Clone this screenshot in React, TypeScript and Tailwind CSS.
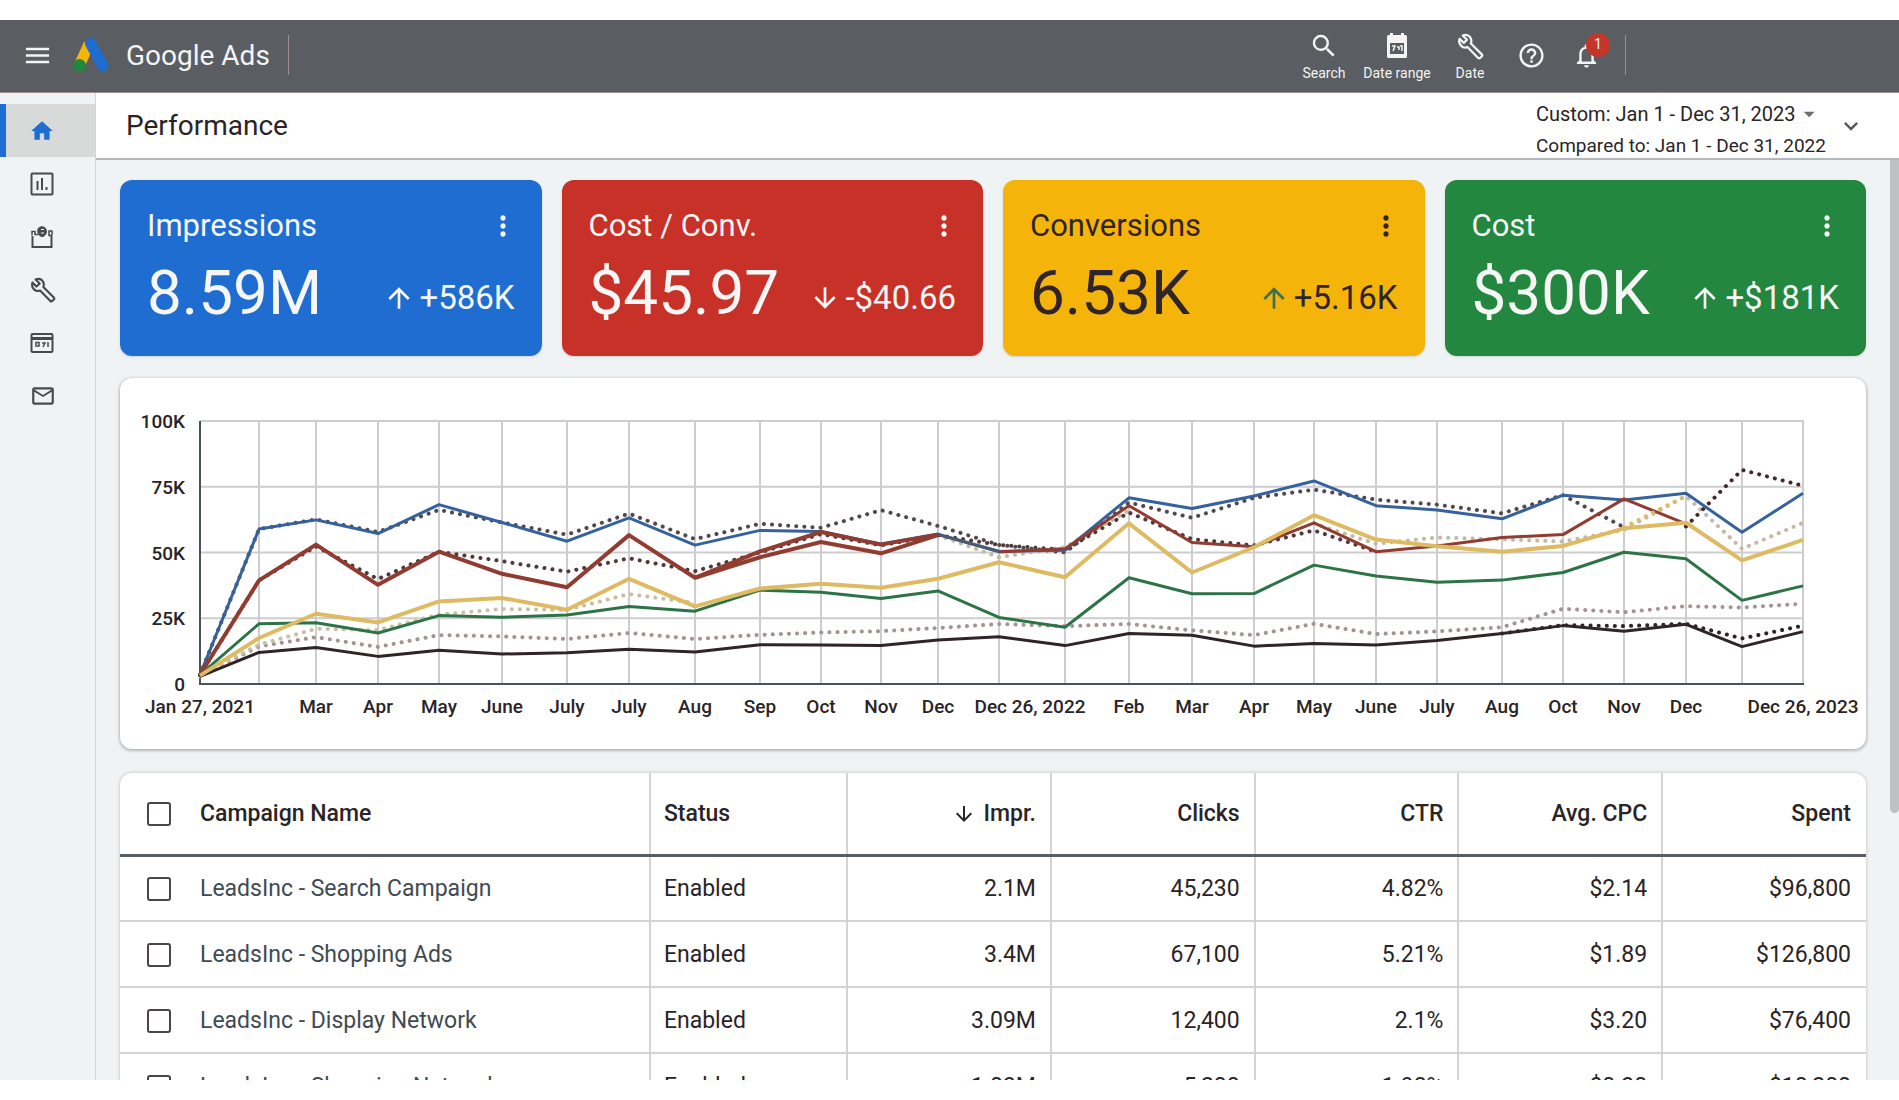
import React from "react";
import {
  MdMenu,
  MdHome,
  MdSearch,
  MdOutlineMailOutline,
  MdHelpOutline,
  MdNotificationsNone,
  MdMoreVert,
  MdArrowUpward,
  MdArrowDownward,
  MdArrowDropDown,
  MdKeyboardArrowDown,
} from "react-icons/md";

function AdsLogo() {
  return (
    <svg width="38" height="36" viewBox="0 0 38 36" aria-hidden="true">
      <path d="M17 7 L7 29" stroke="#f4b40a" strokeWidth="11" />
      <path d="M18.500 6.500 L31 29" stroke="#1f6dd0" strokeWidth="11" strokeLinecap="round" />
      <circle cx="7.500" cy="28.500" r="6.500" fill="#23873f" />
    </svg>
  );
}

function WrenchIcon({ size = 26, weight = 2 }: { size?: number; weight?: number }) {
  return (
    <svg width={size} height={size} viewBox="0 0 24 24" fill="none" stroke="currentColor" strokeWidth={weight} strokeLinejoin="round" aria-hidden="true">
      <path d="M2.300 5.200 L6 8.800 L8.900 6 L5.200 2.300 C8 1 11 2 12.200 4.600 C13 6.300 12.900 7.800 12.300 9.300 L22 19 C22.600 19.600 22.600 20.200 22 20.800 L20.500 22.200 C20 22.700 19.400 22.700 18.800 22.200 L9.300 12.500 C7.500 13.200 5.500 13 3.900 11.600 C2 9.900 1.500 7.500 2.300 5.200 Z" />
    </svg>
  );
}

function ReportsIcon() {
  return (
    <svg width="24" height="24" viewBox="0 0 24 24" fill="none" stroke="currentColor" strokeWidth="2" aria-hidden="true">
      <rect x="1.500" y="1.500" width="21" height="21" rx="1" />
      <path d="M7.500 9v9M12 6v12M16.500 15v3" />
    </svg>
  );
}

function BriefcaseIcon() {
  return (
    <svg width="24" height="24" viewBox="0 0 24 24" fill="none" stroke="currentColor" strokeWidth="2" aria-hidden="true">
      <path d="M2.500 11V22h19V11" />
      <path d="M2 10.500V6.500h3v3h3M22 10.500V6h-3v4.500h3" strokeWidth="1.500" />
      <path d="M8 4C9 1 15.500 1 16 4.500C17.500 8 15 11.500 12 11.500C9 11.500 7 7.500 8 4Z" fill="currentColor" strokeWidth="1" />
      <path d="M11 4.500h3M11 8h3" stroke="#f1f3f4" strokeWidth="1" />
    </svg>
  );
}

function BillingIcon() {
  return (
    <svg width="24" height="24" viewBox="0 0 24 24" fill="none" stroke="currentColor" strokeWidth="2" aria-hidden="true">
      <rect x="1.500" y="3" width="21" height="18" rx="1" />
      <path d="M2 7.500h20" strokeWidth="3" />
      <path d="M6 11.500v3.500h3v-3.500zM12 12h3l-2 4M18 11v5" strokeWidth="1.500" />
    </svg>
  );
}

function CalendarIcon() {
  return (
    <svg width="22" height="26" viewBox="0 0 22 26" aria-hidden="true">
      <path d="M4 0h3v2h8V0h3v2h1.500A1.500 1.500 0 0 1 21 3.500v20a1.500 1.500 0 0 1-1.500 1.500h-17A1.500 1.500 0 0 1 1 23.500v-20A1.500 1.500 0 0 1 2.500 2H4z" fill="currentColor" />
      <path d="M4 10h14v11H4z" fill="#5a5d61" />
      <path d="M6 13h3l-2 5M11 14h2v3M14 13h2v5" stroke="currentColor" strokeWidth="1.500" fill="none" />
    </svg>
  );
}

const navItems = [
  { label: "Home", icon: <MdHome className="size-[26px]" />, active: true },
  { label: "Reports", icon: <ReportsIcon />, active: false },
  { label: "Campaigns", icon: <BriefcaseIcon />, active: false },
  { label: "Tools", icon: <WrenchIcon size={26} />, active: false },
  { label: "Billing", icon: <BillingIcon />, active: false },
  { label: "Messages", icon: <MdOutlineMailOutline className="size-[26px]" />, active: false },
];

function Header() {
  return (
    <header className="flex h-[73px] shrink-0 items-center border-b border-[#a08f8b] bg-[#5a5d61] pb-[2px] text-[#f4f4f4]">
      <button type="button" aria-label="Menu" className="ml-[22px]">
        <MdMenu className="size-[31px]" />
      </button>
      <div className="ml-[19px] flex items-center">
        <AdsLogo />
        <span className="ml-4 pt-[2px] text-[28px] leading-9">Google Ads</span>
      </div>
      <div className="ml-[18px] h-10 w-px bg-[#a08f8b]" />
      <div className="ml-auto flex items-center">
        <button type="button" className="flex w-[70px] flex-col items-center pt-1">
          <MdSearch className="size-[30px]" />
          <span className="mt-[2px] text-[14px] leading-5">Search</span>
        </button>
        <button type="button" className="flex w-[76px] flex-col items-center pt-1">
          <span className="flex h-[30px] items-center"><CalendarIcon /></span>
          <span className="mt-[2px] text-[14px] leading-5">Date range</span>
        </button>
        <button type="button" className="flex w-[70px] flex-col items-center pt-1">
          <span className="flex h-[30px] items-center"><WrenchIcon size={27} /></span>
          <span className="mt-[2px] text-[14px] leading-5">Date</span>
        </button>
        <button type="button" aria-label="Help" className="ml-3">
          <MdHelpOutline className="size-[29px]" />
        </button>
        <button type="button" aria-label="Notifications, 1 new" className="relative ml-[26px]">
          <MdNotificationsNone className="size-[29px]" />
          <span className="absolute -top-2 left-[14px] flex size-6 items-center justify-center rounded-full bg-[#c5362a] text-[14px]">1</span>
        </button>
        <div className="mr-[273px] ml-6 h-10 w-px bg-[#a08f8b]" />
      </div>
    </header>
  );
}

function Sidebar() {
  return (
    <nav className="w-24 shrink-0 border-r border-[#d2d4d5] bg-[#f0f3f3] pt-[11px] text-[#474a4e]">
      {navItems.map((item) => (
        <a
          key={item.label}
          href="#"
          aria-label={item.label}
          className={
            item.active
              ? "flex h-[53px] items-center border-l-6 border-[#1f6dd0] bg-[#d8d9d9] pl-[23px] text-[#1f6dd0]"
              : "flex h-[53px] items-center pl-[30px]"
          }
        >
          {item.icon}
        </a>
      ))}
    </nav>
  );
}

function TitleBar() {
  return (
    <div className="flex h-[67px] shrink-0 items-center border-b-2 border-[#b4b7ba] bg-white pl-[30px] text-[#2a2426]">
      <h1 className="text-[28px] leading-9">Performance</h1>
      <div className="ml-auto w-[286px] pt-2 leading-8">
        <div className="flex items-center text-[20px] leading-8 whitespace-nowrap">
          Custom: Jan 1 - Dec 31, 2023
          <MdArrowDropDown className="size-8 text-[#6b6e72]" />
        </div>
        <div className="text-[19px] leading-8 whitespace-nowrap">Compared to: Jan 1 - Dec 31, 2022</div>
      </div>
      <button type="button" aria-label="Expand" className="mr-[34px] ml-[15px] text-[#55585c]">
        <MdKeyboardArrowDown className="size-7" />
      </button>
    </div>
  );
}

const metrics = [
  { label: "Impressions", value: "8.59M", delta: "+586K", up: true, style: "bg-[#1f6dd0] text-[#f6f6f6]", arrow: "" },
  { label: "Cost / Conv.", value: "$45.97", delta: "-$40.66", up: false, style: "bg-[#c83127] text-[#f6f6f6]", arrow: "" },
  { label: "Conversions", value: "6.53K", delta: "+5.16K", up: true, style: "bg-[#f4b40a] text-[#2f2427]", arrow: "text-[#3b7050]" },
  { label: "Cost", value: "$300K", delta: "+$181K", up: true, style: "bg-[#23873f] text-[#f6f6f6]", arrow: "" },
];

function MetricCard({ metric }: { metric: (typeof metrics)[number] }) {
  return (
    <section className={`h-44 rounded-xl pr-[27px] pl-[27px] pt-7 shadow-sm ${metric.style}`}>
      <div className="flex items-center justify-between">
        <h2 className="text-[31px] leading-9">{metric.label}</h2>
        <button type="button" aria-label={`${metric.label} options`} className="-mr-1">
          <MdMoreVert className="size-8" />
        </button>
      </div>
      <div className="flex items-baseline justify-between">
        <span className="text-[62px] leading-[98px]">{metric.value}</span>
        <span className="flex items-center text-[33px] leading-10">
          <MdArrowUpward className={metric.up ? `mr-1 size-8 ${metric.arrow}` : "hidden"} />
          <MdArrowDownward className={metric.up ? "hidden" : "mr-1 size-8"} />
          {metric.delta}
        </span>
      </div>
    </section>
  );
}

const gridX = [80, 139, 196, 258, 319, 382, 447, 509, 575, 640, 701, 761, 818, 879, 945, 1009, 1072, 1134, 1194, 1256, 1317, 1382, 1443, 1504, 1566, 1622, 1683];

const axisLabels: [number, string][] = [
  [80, "Jan 27, 2021"], [196, "Mar"], [258, "Apr"], [319, "May"], [382, "June"], [447, "July"], [509, "July"],
  [575, "Aug"], [640, "Sep"], [701, "Oct"], [761, "Nov"], [818, "Dec"], [910, "Dec 26, 2022"], [1009, "Feb"],
  [1072, "Mar"], [1134, "Apr"], [1194, "May"], [1256, "June"], [1317, "July"], [1382, "Aug"], [1443, "Oct"],
  [1504, "Nov"], [1566, "Dec"], [1683, "Dec 26, 2023"],
];

type Series = { color: string; width: number; dotted?: boolean; start?: number; values: number[] };

const series: Series[] = [
  { color: "#a39391", width: 4, dotted: true, values: [3, 14.3, 17.8, 14.1, 18.6, 18.1, 17.1, 19.4, 17.1, 18.7, 19.6, 20.1, 21.3, 22.8, 22, 22.8, 20.4, 18.6, 22.9, 19, 20, 21.6, 28.6, 27.3, 29.6, 29.1, 30.5] },
  { color: "#c9bea4", width: 4, dotted: true, values: [3, 15, 21, 20.5, 26.4, 28.5, 28.2, 34.2, 30.8] },
  { color: "#c4b9a4", width: 4, dotted: true, start: 12, values: [56.6, 48.2, 52, 66] },
  { color: "#c4b9a4", width: 4, dotted: true, start: 18, values: [61, 53.3, 55.7, 55, 54.2, 58.6, 71.5, 51.4, 61.3] },
  { color: "#51494c", width: 4, dotted: true, values: [3.5, 58.9, 62.6, 57.8, 66.2, 61.4, 56.8, 64.8, 55.1, 60.9, 59.4, 66.1, 60.1, 52.9, 50, 69, 63.2, 70.8, 73.9, 70.1, 68.2, 64.9, 71.8, 59.6] },
  { color: "#51393a", width: 4, dotted: true, values: [3.5, 39.4, 52.3, 39.9, 50.3, 46.7, 42.7, 47.8, 42.9, 50, 57, 52.7, 56.6, 52.9, 51, 65.2, 55.1, 52.7, 58.4, 50.3] },
  { color: "#45282b", width: 4, dotted: true, start: 24, values: [59.9, 81.4, 75.4] },
  { color: "#2f2427", width: 4, dotted: true, start: 21, values: [19.2, 22.4, 22, 22.9, 17.3, 22.2] },
  { color: "#2f2427", width: 3, values: [2.9, 12, 13.9, 10.5, 12.8, 11.4, 11.9, 13.2, 12.2, 14.9, 14.8, 14.6, 16.7, 18, 14.6, 19.2, 18.5, 14.4, 15.4, 14.8, 16.5, 19.2, 22.2, 20.1, 22.7, 14.2, 19.9] },
  { color: "#2c7446", width: 3, values: [3.5, 22.9, 23.3, 19.4, 26, 25.4, 26.2, 29.5, 27.7, 35.7, 34.9, 32.5, 35.4, 25.3, 21.6, 40.4, 34.3, 34.4, 45.2, 41.1, 38.7, 39.5, 42.4, 50.1, 47.6, 31.8, 37.3] },
  { color: "#35629c", width: 3, values: [3.5, 58.9, 62.4, 57.2, 68.2, 61.4, 54.3, 63.2, 52.8, 58.4, 58, 53.2, 57, 50.4, 50.9, 70.8, 66.7, 71.5, 77.2, 67.8, 66.2, 62.8, 71.8, 70, 72.5, 57.7, 72.5] },
  { color: "#923b30", width: 4, values: [3.5, 39.4, 53, 37.7, 50.3, 41.9, 36.8, 56.6, 40.4, 50.4, 57.8, 53, 56.8] },
  { color: "#923b30", width: 4, start: 8, values: [40.4, 48.2, 54, 49.7, 56.6] },
  { color: "#4a5a70", width: 3, start: 12, values: [56.8, 50.4] },
  { color: "#923b30", width: 3, start: 13, values: [50.2, 51.4, 67.8, 53.8, 52.2, 61.3, 50.3, 52.5, 55.7, 56.8, 70.4, 60.9] },
  { color: "#debb62", width: 4, values: [3.2, 17.5, 26.7, 23.4, 31.4, 32.7, 28.2, 40, 29.5, 36.3, 38.1, 36.6, 40, 46.3, 40.6, 61.1, 42.4, 52, 64.2, 54.9, 52.4, 50.3, 52.5, 59.2, 61.3, 47, 54.8] },
  { color: "#debb62", width: 4, dotted: true, start: 23, values: [59.6, 71.5] },
];

const yFor = (value: number) => 306 - value * 2.63;

function Chart() {
  return (
    <section className="mt-[22px] rounded-xl bg-white shadow-[0_1px_3px_1px_#b4b7ba]">
      <svg viewBox="0 0 1746 371" className="block w-full" role="img" aria-label="Performance over time">
        <g stroke="#cdcdcf" strokeWidth="2">
          {gridX.map((x) => (
            <line key={x} x1={x} x2={x} y1="43" y2="306" />
          ))}
          {[100, 75, 50, 25].map((v) => (
            <line key={v} x1="80" x2="1684" y1={yFor(v)} y2={yFor(v)} />
          ))}
        </g>
        <path d="M80 43V306H1684" fill="none" stroke="#4a5356" strokeWidth="2" />
        {series.map((s, i) => (
          <polyline
            key={i}
            fill="none"
            stroke={s.color}
            strokeWidth={s.width}
            strokeLinejoin="round"
            strokeLinecap={s.dotted ? "round" : undefined}
            strokeDasharray={s.dotted ? "0.1 8" : undefined}
            points={s.values.map((v, j) => `${gridX[j + (s.start ?? 0)]},${yFor(v)}`).join(" ")}
          />
        ))}
        <g className="fill-[#2a2426] text-[19px] font-medium">
          {[["100K", 100], ["75K", 75], ["50K", 50], ["25K", 25], ["0", 0]].map(([label, v]) => (
            <text key={label} x="65" y={yFor(Number(v)) + 7} textAnchor="end">{label}</text>
          ))}
          {axisLabels.map(([x, label]) => (
            <text key={x} x={x} y="335" textAnchor="middle">{label}</text>
          ))}
        </g>
      </svg>
    </section>
  );
}

const rows = [
  ["LeadsInc - Search Campaign", "Enabled", "2.1M", "45,230", "4.82%", "$2.14", "$96,800"],
  ["LeadsInc - Shopping Ads", "Enabled", "3.4M", "67,100", "5.21%", "$1.89", "$126,800"],
  ["LeadsInc - Display Network", "Enabled", "3.09M", "12,400", "2.1%", "$3.20", "$76,400"],
  ["LeadsInc - Shopping Network", "Enabled", "1.03M", "5,200", "1.98%", "$0.30", "$10,200"],
];

function Checkbox({ label }: { label: string }) {
  return (
    <input
      type="checkbox"
      aria-label={label}
      className="block size-6 shrink-0 appearance-none rounded-[3px] border-2 border-[#4a4548] bg-white checked:bg-[#1f6dd0]"
    />
  );
}

function CampaignTable() {
  return (
    <section className="mt-6 overflow-hidden rounded-t-xl bg-white shadow-[0_0_3px_1px_#cfd1d2]">
      <table className="w-full table-fixed border-collapse text-[23px] leading-8 text-[#2a2426]">
        <colgroup>
          <col className="w-[30.350%]" />
          <col className="w-[11.300%]" />
          <col />
          <col />
          <col />
          <col />
          <col />
        </colgroup>
        <thead>
          <tr className="h-[82px] border-b-3 border-[#5a5d61]">
            <th scope="col" className="border-r-2 border-r-[#d4d4d5] pt-[2px] pl-[27px] text-left font-medium">
              <div className="flex items-center gap-[29px]">
                <Checkbox label="Select all campaigns" />
                Campaign Name
              </div>
            </th>
            <th scope="col" className="border-r-2 border-r-[#d4d4d5] pt-[2px] pl-[13px] text-left font-medium">Status</th>
            <th scope="col" className="border-r-2 border-r-[#d4d4d5] pt-[2px] pr-[14px] font-medium">
              <div className="flex items-center justify-end gap-2">
                <MdArrowDownward className="size-6" />
                Impr.
              </div>
            </th>
            {["Clicks", "CTR", "Avg. CPC", "Spent"].map((h) => (
              <th key={h} scope="col" className="border-r-2 border-r-[#d4d4d5] pt-[2px] pr-[14px] text-right font-medium last:border-r-0 last:pr-[15px]">{h}</th>
            ))}
          </tr>
        </thead>
        <tbody>
          {rows.map(([name, status, ...numbers]) => (
            <tr key={name} className="h-[66px] border-b-2 border-[#d4d4d5]">
              <td className="border-r-2 border-r-[#d4d4d5] pt-[2px] pl-[27px] text-[#414a52]">
                <div className="flex items-center gap-[29px]">
                  <Checkbox label={`Select ${name}`} />
                  {name}
                </div>
              </td>
              <td className="border-r-2 border-r-[#d4d4d5] pt-[2px] pl-[13px]">{status}</td>
              {numbers.map((n, i) => (
                <td key={i} className="border-r-2 border-r-[#d4d4d5] pt-[2px] pr-[14px] text-right last:border-r-0 last:pr-[15px]">{n}</td>
              ))}
            </tr>
          ))}
        </tbody>
      </table>
    </section>
  );
}

export default function App() {
  return (
    <div className="h-screen bg-white py-5 font-[Roboto,'Liberation_Sans',sans-serif]">
      <div className="flex h-full flex-col overflow-hidden bg-[#f0f3f3]">
        <Header />
        <div className="flex min-h-0 flex-1">
          <Sidebar />
          <div className="flex min-w-0 flex-1 flex-col">
            <TitleBar />
            <div className="flex min-h-0 flex-1">
              <main className="min-w-0 flex-1 overflow-hidden pt-5 pr-6 pl-6">
                <div className="grid grid-cols-4 gap-5">
                  {metrics.map((m) => (
                    <MetricCard key={m.label} metric={m} />
                  ))}
                </div>
                <Chart />
                <CampaignTable />
              </main>
              <div className="w-[9px] shrink-0">
                <div className="h-[71%] rounded-b-md bg-[#bfc0c4]" />
              </div>
            </div>
          </div>
        </div>
      </div>
    </div>
  );
}
